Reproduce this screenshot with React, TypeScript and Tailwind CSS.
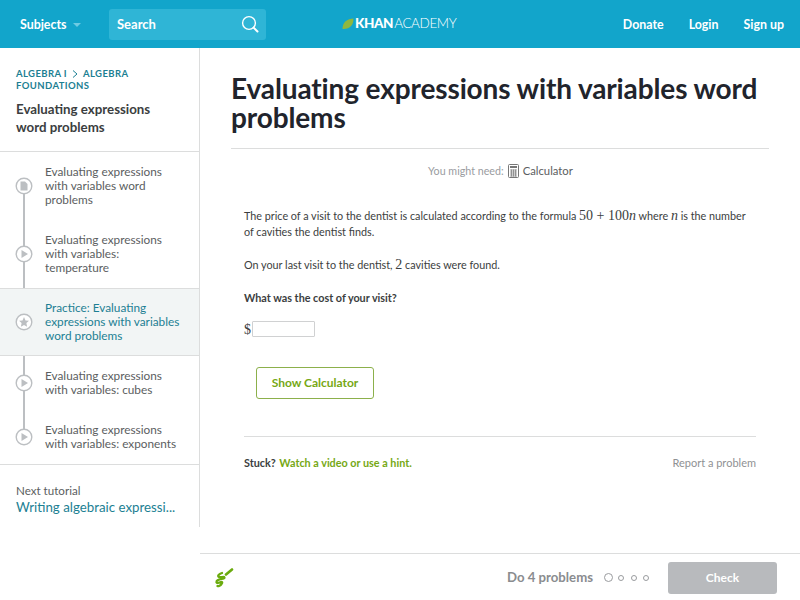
import React from "react";

const Dot = ({ kind }: { kind: "doc" | "play" | "star" }) => (
  <svg width="18" height="18" viewBox="0 0 18 18" className="absolute left-[15px] top-1/2 -translate-y-1/2">
    <circle cx="9" cy="9" r="7.8" fill="#fff" stroke="#bcbfc2" strokeWidth="1.4" />
    {kind === "play" && <path d="M6.5 5 L13 9 L6.5 13 Z" fill="#bcbfc2" />}
    {kind === "doc" && <path d="M5.5 4.5 H10 L12.5 7 V13.5 H5.5 Z" fill="#bcbfc2" />}
    {kind === "star" && <path d="M9 4 L10.5 7.4 L14 7.8 L11.4 10.1 L12.1 13.7 L9 11.9 L5.9 13.7 L6.6 10.1 L4 7.8 L7.5 7.4 Z" fill="#bcbfc2" />}
  </svg>
);

const items: { t: string[]; kind: "doc" | "play" | "star"; h: string; active?: boolean }[] = [
  { t: ["Evaluating expressions", "with variables word", "problems"], kind: "doc", h: "h-[68px]" },
  { t: ["Evaluating expressions", "with variables:", "temperature"], kind: "play", h: "h-[68px]" },
  { t: ["Practice: Evaluating", "expressions with variables", "word problems"], kind: "star", h: "h-[68px]", active: true },
  { t: ["Evaluating expressions", "with variables: cubes"], kind: "play", h: "h-[54px]" },
  { t: ["Evaluating expressions", "with variables: exponents"], kind: "play", h: "h-[54px]" },
];

export default function App() {
  return (
    <div className="w-[800px] h-[600px] overflow-hidden bg-white flex flex-col font-['Lato','Open_Sans',sans-serif] text-[#21242c]">
      <header className="h-[48px] bg-[#12a5cb] flex items-center shrink-0 relative text-white font-bold text-[12.4px]">
        <div className="w-[109px] pl-[20px] pt-[2px] flex items-center gap-[6px]">
          Subjects
          <span className="w-0 h-0 border-x-[4px] border-x-transparent border-t-[4px] border-t-[#6fcbe3]" />
        </div>
        <div className="w-[157px] h-[31px] bg-[#2fb5d6] rounded-[3px] flex items-center justify-between pl-[8px] pr-[7px] text-[13px]">
          <span className="pt-[1px]">Search</span>
          <svg width="18" height="18" viewBox="0 0 18 18" fill="none" stroke="#fff" strokeWidth="1.4">
            <circle cx="8" cy="8" r="6.4" />
            <path d="M12.6 12.6 L16.5 16.5" strokeWidth="2" strokeLinecap="round" />
          </svg>
        </div>
        <div className="ml-[76px] flex items-center gap-[1px] tracking-[-0.4px]">
          <svg width="12" height="12" viewBox="0 0 12 12">
            <path d="M0.5 11 C0.5 4 5 1 11.5 0.5 C11.5 7 8 11.5 0.5 11 Z" fill="#8fb73e" />
          </svg>
          <span className="text-[13.5px] font-black leading-none">KHAN</span>
          <span className="text-[13.5px] font-light leading-none">ACADEMY</span>
        </div>
        <nav className="ml-auto pr-[16px] pt-[2px] flex gap-[25px]">
          <span>Donate</span>
          <span>Login</span>
          <span>Sign up</span>
        </nav>
      </header>

      <div className="flex flex-1 min-h-0">
        <aside className="w-[200px] shrink-0 flex flex-col">
          <div className="border-r border-r-[#dcdddd] h-[479px] flex flex-col">
            <div className="h-[104px] pl-[16px] pt-[20px] border-b border-b-[#dcdddd] shrink-0">
              <div className="text-[9.5px] leading-[12px] font-bold tracking-[0.4px] text-[#1c7f93]">
                <div className="flex items-center">
                  ALGEBRA I
                  <svg width="6" height="8" viewBox="0 0 6 8" fill="none" stroke="#1c7f93" strokeWidth="1" className="mx-[5px]">
                    <path d="M1 0.5 L5 4 L1 7.5" />
                  </svg>
                  ALGEBRA
                </div>
                <div>FOUNDATIONS</div>
              </div>
              <div className="mt-[8px] text-[13.3px] leading-[18px] font-bold text-[#3b3e40]">
                <div>Evaluating expressions</div>
                <div>word problems</div>
              </div>
            </div>
            <div className="relative border-b border-b-[#dcdddd] shrink-0">
              <div className="absolute left-[23px] top-[33px] bottom-[20px] w-[2px] bg-[#bcbfc2]" />
              {items.map((it, i) => (
                <div
                  key={i}
                  className={`relative flex flex-col justify-center pl-[45px] text-[11.8px] leading-[14px] ${it.h} ${
                    it.active ? "bg-[#f2f5f5] border-y border-y-[#dcdddd] text-[#1c7f93]" : "text-[#5b5e61]"
                  }`}
                >
                  <Dot kind={it.kind} />
                  {it.t.map((l) => (
                    <div key={l} className="whitespace-nowrap">{l}</div>
                  ))}
                </div>
              ))}
            </div>
            <div className="pl-[16px] pt-[19px]">
              <div className="text-[11.6px] leading-[14px] text-[#5b5e61]">Next tutorial</div>
              <div className="mt-[1px] text-[13.3px] leading-[17px] text-[#1c7f93] whitespace-nowrap">Writing algebraic expressi...</div>
            </div>
          </div>
        </aside>

        <main className="flex-1 min-w-0 flex flex-col">
          <div className="flex-1 px-[31px]">
            <h1 className="pt-[26px] pb-[16px] text-[28px] leading-[29px] font-bold border-b border-b-[#dcdddd] tracking-[-0.12px]">
              Evaluating expressions with variables word problems
            </h1>
            <div className="mt-[14px] flex justify-center items-center text-[10.7px] leading-[16px] pl-[1px]">
              <span className="text-[#9a9c9f]">You might need:</span>
              <svg width="11" height="14" viewBox="0 0 11 14" className="mx-[4px]" fill="none" stroke="#777" strokeWidth="1">
                <rect x="0.5" y="0.5" width="10" height="13" rx="1" />
                <path d="M2 2.5 H9 M2 3.5 H9" />
                <path d="M2 6 H9 M2 8 H9 M2 10 H9 M2 12 H9 M3.5 5.5 V12.5 M5.5 5.5 V12.5 M7.5 5.5 V12.5" strokeWidth="0.7" />
              </svg>
              <span className="text-[#5b5e61] text-[11.3px]">Calculator</span>
            </div>
            <div className="mx-[13px] text-[10.8px] text-[#3b3e40]">
              <p className="mt-[29px] leading-[16px] whitespace-nowrap">
                The price of a visit to the dentist is calculated according to the formula{" "}
                <span className="font-['Liberation_Serif',serif] text-[14px]">50 + 100<i>n</i></span> where{" "}
                <i className="font-['Liberation_Serif',serif] text-[14px]">n</i> is the number
                <br />
                of cavities the dentist finds.
              </p>
              <p className="mt-[16px] leading-[17px]">
                On your last visit to the dentist, <span className="font-['Liberation_Serif',serif] text-[14px]">2</span> cavities were found.
              </p>
              <p className="mt-[16px] leading-[17px] font-bold">What was the cost of your visit?</p>
              <div className="mt-[15px] flex items-center gap-[1px] h-[16px]">
                <span className="font-['Liberation_Serif',serif] text-[14px] w-[7px]">$</span>
                <div className="w-[63px] h-[16px] bg-white border border-[#d0d1d2] rounded-[1px]" />
              </div>
              <div className="mt-[30px] ml-[12px] w-[118px] h-[32px] border border-[#8cb04b] rounded-[3px] flex items-center justify-center text-[#76a815] font-bold text-[12px]">
                Show Calculator
              </div>
              <div className="mt-[37px] pt-[18px] border-t border-t-[#dcdddd] flex justify-between items-center leading-[16px]">
                <span className="font-bold">
                  Stuck? <span className="ml-[1px] text-[#76a815]">Watch a video or use a hint.</span>
                </span>
                <span className="text-[#8f9193] text-[11px]">Report a problem</span>
              </div>
            </div>
          </div>
          <footer className="h-[47px] shrink-0 border-t border-t-[#dcdddd] flex items-center pt-[1px] pl-[14px] pr-[23px]">
            <svg width="20" height="20" viewBox="0 0 20 20" fill="none" stroke="#6bab0e" strokeWidth="2.3" strokeLinecap="round">
              <path d="M12 6.5 L18 1.5" strokeWidth="2.6" />
              <path d="M8 5 C5 6 3 8 5 9 C7 10 10 8 10.5 9.5 C11 11 3 11 2.5 13.5 C2 15.5 5 15 7 14 C8.5 13.5 8.5 15 7.5 16 C6.5 17.5 4.5 18.5 3.5 18" />
            </svg>
            <span className="ml-auto text-[#8a8c8f] font-bold text-[13.2px]">Do 4 problems</span>
            <div className="ml-[11px] flex items-center">
              <span className="w-[9px] h-[9px] rounded-full border border-[#9a9c9f]" />
              <span className="ml-[5px] w-[6px] h-[6px] rounded-full border border-[#9a9c9f]" />
              <span className="ml-[7px] w-[6px] h-[6px] rounded-full border border-[#9a9c9f]" />
              <span className="ml-[6px] w-[6px] h-[6px] rounded-full border border-[#9a9c9f]" />
            </div>
            <div className="ml-[19px] w-[109px] h-[32px] bg-[#b8babd] rounded-[3px] flex items-center justify-center text-white font-bold text-[12px]">
              Check
            </div>
          </footer>
        </main>
      </div>
    </div>
  );
}
